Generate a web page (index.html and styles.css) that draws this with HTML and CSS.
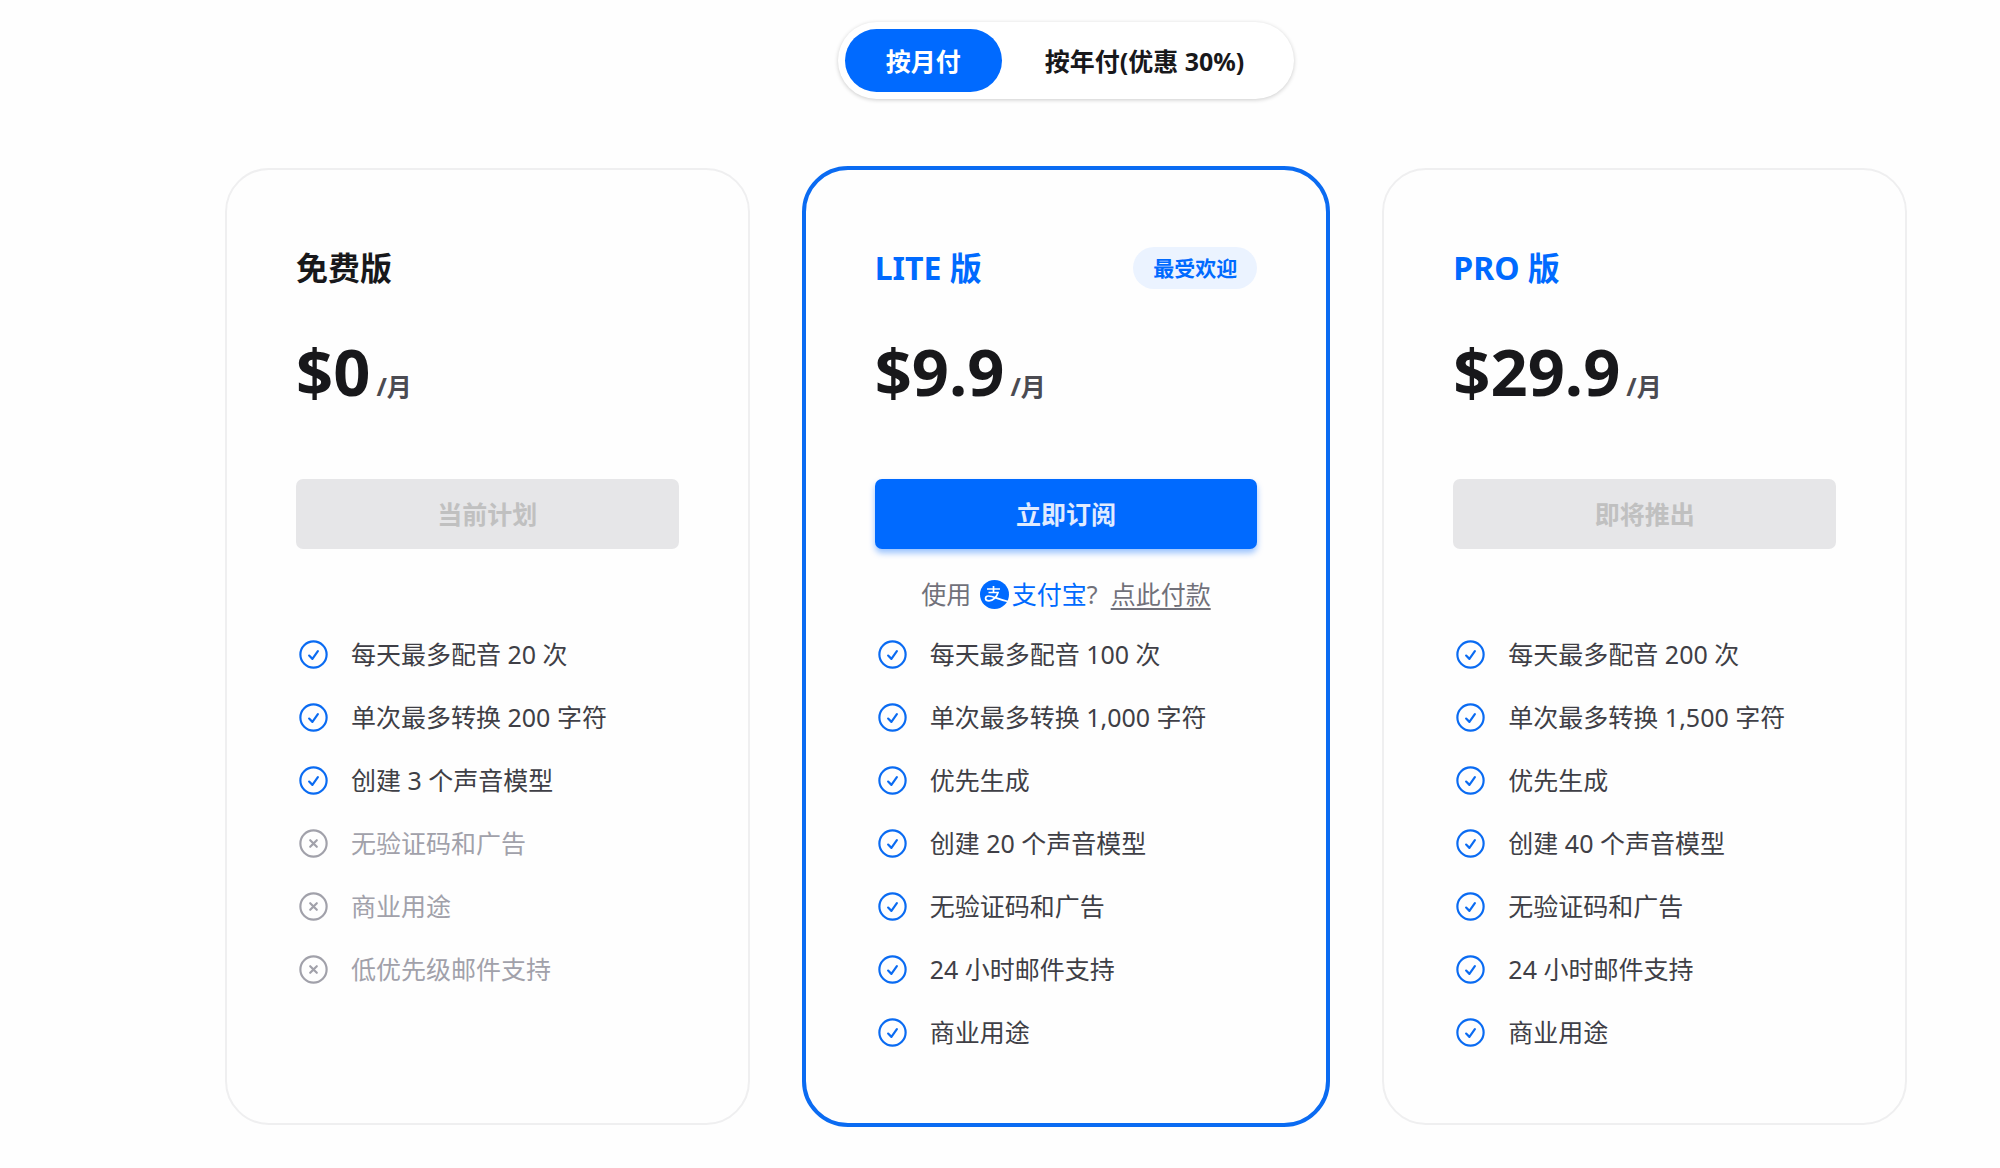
FILE: index.html
```html
<!DOCTYPE html>
<html lang="zh-CN">
<head>
<meta charset="utf-8">
<title>价格方案</title>
<meta name="viewport" content="width=device-width, initial-scale=1">
<link rel="stylesheet" href="styles.css">
</head>
<body>
<svg class="sprite" aria-hidden="true">
  <symbol id="check" viewBox="0 0 24 24"><path d="M9 12.75 11.25 15 15 9.75M21 12a9 9 0 1 1-18 0 9 9 0 0 1 18 0Z"/></symbol>
  <symbol id="cross" viewBox="0 0 24 24"><path d="m9.75 9.75 4.5 4.5m0-4.5-4.5 4.5M21 12a9 9 0 1 1-18 0 9 9 0 0 1 18 0Z"/></symbol>
</svg>
<main class="pricing">
  <div class="toggle" role="group" aria-label="付款周期">
    <button type="button" class="toggle-option is-active" aria-pressed="true">按月付</button>
    <button type="button" class="toggle-option" aria-pressed="false">按年付(优惠 30%)</button>
  </div>

  <div class="plans">
    <section class="plan">
      <header class="plan-header"><h2 class="plan-name">免费版</h2></header>
      <p class="price"><span class="amount">$0</span><span class="period">/月</span></p>
      <div class="action"><button type="button" class="cta" disabled>当前计划</button></div>
      <ul class="features">
        <li><svg class="icon"><use href="#check"/></svg>每天最多配音 20 次</li>
        <li><svg class="icon"><use href="#check"/></svg>单次最多转换 200 字符</li>
        <li><svg class="icon"><use href="#check"/></svg>创建 3 个声音模型</li>
        <li class="off"><svg class="icon"><use href="#cross"/></svg>无验证码和广告</li>
        <li class="off"><svg class="icon"><use href="#cross"/></svg>商业用途</li>
        <li class="off"><svg class="icon"><use href="#cross"/></svg>低优先级邮件支持</li>
      </ul>
    </section>

    <section class="plan is-featured">
      <header class="plan-header"><h2 class="plan-name is-blue">LITE 版</h2><span class="badge">最受欢迎</span></header>
      <p class="price"><span class="amount">$9.9</span><span class="period">/月</span></p>
      <div class="action">
        <button type="button" class="cta">立即订阅</button>
        <p class="note">使用&nbsp;<svg class="alipay" viewBox="0 0 29 29" aria-hidden="true"><circle cx="14.5" cy="14.5" r="14.5" fill="#006aff"/><path d="M7 9h13M13.500 6v6.500M8.500 12.500h9.500c-1 4-4.500 8.300-9 8.300-4.500 0-4.500-4.800-.5-4.800 4.500 0 9.500 3.200 19.500 5.500" fill="none" stroke="#fff" stroke-width="1.700"/></svg><span class="alipay-name">支付宝</span>?&nbsp;&nbsp;<a href="#alipay">点此付款</a></p>
      </div>
      <ul class="features">
        <li><svg class="icon"><use href="#check"/></svg>每天最多配音 100 次</li>
        <li><svg class="icon"><use href="#check"/></svg>单次最多转换 1,000 字符</li>
        <li><svg class="icon"><use href="#check"/></svg>优先生成</li>
        <li><svg class="icon"><use href="#check"/></svg>创建 20 个声音模型</li>
        <li><svg class="icon"><use href="#check"/></svg>无验证码和广告</li>
        <li><svg class="icon"><use href="#check"/></svg>24 小时邮件支持</li>
        <li><svg class="icon"><use href="#check"/></svg>商业用途</li>
      </ul>
    </section>

    <section class="plan">
      <header class="plan-header"><h2 class="plan-name is-blue">PRO 版</h2></header>
      <p class="price"><span class="amount">$29.9</span><span class="period">/月</span></p>
      <div class="action"><button type="button" class="cta" disabled>即将推出</button></div>
      <ul class="features">
        <li><svg class="icon"><use href="#check"/></svg>每天最多配音 200 次</li>
        <li><svg class="icon"><use href="#check"/></svg>单次最多转换 1,500 字符</li>
        <li><svg class="icon"><use href="#check"/></svg>优先生成</li>
        <li><svg class="icon"><use href="#check"/></svg>创建 40 个声音模型</li>
        <li><svg class="icon"><use href="#check"/></svg>无验证码和广告</li>
        <li><svg class="icon"><use href="#check"/></svg>24 小时邮件支持</li>
        <li><svg class="icon"><use href="#check"/></svg>商业用途</li>
      </ul>
    </section>
  </div>
</main>
</body>
</html>
```
FILE: styles.css
```css
* { box-sizing: border-box; }

body {
  margin: 0;
  background: #fefefe;
  color: #3f3f46;
  font-family: "Noto Sans", "Noto Sans CJK SC", sans-serif;
  font-size: 25px;
  line-height: 36px;
}

h2, p, ul { margin: 0; padding: 0; }
button { font: inherit; border: 0; cursor: pointer; }
.sprite { display: none; }

.pricing {
  display: flex;
  flex-direction: column;
  align-items: center;
  gap: 69px;
  padding: 22px 93px 43px 225px;
}

.toggle {
  display: flex;
  gap: 2px;
  padding: 7px 9px 7px 7px;
  border-radius: 39px;
  background: #fff;
  box-shadow: 0 1px 4px rgba(0, 0, 0, 0.2);
}

.toggle-option {
  height: 63px;
  padding: 0 41px;
  border-radius: 32px;
  background: transparent;
  color: #18181b;
  font-weight: 700;
  line-height: 34px;
  white-space: nowrap;
}

.toggle-option.is-active { background: #006aff; color: #fff; }

.plans {
  display: grid;
  grid-template-columns: repeat(3, minmax(0, 1fr));
  gap: 54px;
  width: 100%;
}

.plan {
  padding: 77px 69px 73px;
  border: 2px solid #efeff0;
  border-radius: 44px;
}

.plan.is-featured {
  margin: -2px;
  border: 4px solid #0a6bf2;
  border-radius: 46px;
}

.plan-header {
  display: flex;
  align-items: center;
  justify-content: space-between;
  height: 42px;
}

.plan-name {
  color: #18181b;
  font-size: 32px;
  font-weight: 700;
  line-height: 42px;
}

.plan-name.is-blue { color: #006aff; }

.badge {
  padding: 0 20px;
  border-radius: 21px;
  background: #ebf3ff;
  color: #006aff;
  font-size: 21px;
  font-weight: 700;
  line-height: 42px;
}

.price {
  display: flex;
  align-items: baseline;
  gap: 6px;
  margin: 42px 0 68px;
  font-weight: 700;
}

.amount { color: #18181b; font-size: 65px; line-height: 80px; }
.period { color: #4b4b52; }

.action { min-height: 157px; }

.cta {
  display: block;
  width: 100%;
  height: 70px;
  border-radius: 7px;
  background: #006aff;
  color: #e0ebff;
  font-weight: 700;
  box-shadow: 0 4px 6px rgba(0, 106, 255, 0.4);
}

.cta:disabled {
  background: #e6e6e8;
  color: #c0c0c0;
  box-shadow: none;
  cursor: default;
}

.note {
  display: flex;
  align-items: center;
  justify-content: center;
  padding: 27px 0 24px;
  color: #71717a;
  white-space: nowrap;
}

.note a { color: inherit; text-underline-offset: 4px; }
.alipay { width: 29px; height: 29px; margin: 0 3px 0 2px; }
.alipay-name { color: #006aff; }

.features {
  display: grid;
  gap: 27px;
  list-style: none;
}

.features li {
  display: flex;
  align-items: center;
  gap: 20px;
  white-space: nowrap;
}

.features .off { color: #a1a1aa; }

.icon {
  flex: none;
  width: 35px;
  height: 35px;
  fill: none;
  stroke: #0a6bf2;
  stroke-width: 1.5;
  stroke-linecap: round;
  stroke-linejoin: round;
}

.off .icon { stroke: #a1a1aa; }
```
